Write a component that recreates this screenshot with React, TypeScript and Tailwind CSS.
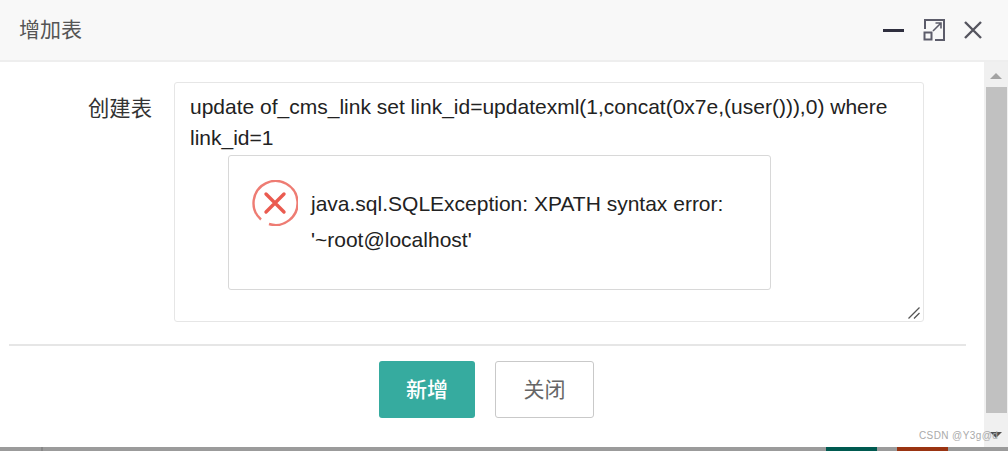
export default function App() {
  return (
    <div className="relative flex h-[451px] w-[1008px] flex-col overflow-hidden bg-white font-['Liberation_Sans','Noto_Sans_CJK_SC',sans-serif] text-[#333]">
      <header className="flex h-[62px] shrink-0 items-center justify-between border-b-2 border-[#eeeeee] bg-[#f8f8f8] pl-[19px] pr-[26px]">
        <h1 className="text-[21px] font-normal text-[#555]">增加表</h1>
        <div className="flex items-center gap-[19px]">
          <div className="h-[3px] w-[21px] bg-[#2f2f3f]" />
          <svg className="h-[22px] w-[22px] text-[#5c5c6a]" viewBox="0 0 22 22" fill="none" stroke="currentColor" strokeWidth={2}>
            <path d="M2 10V1h19v20h-9" />
            <rect x="1.5" y="13.5" width="7" height="7" />
            <path d="M10 12l8-8M12.5 4H18v5.5" strokeWidth={1.6} />
          </svg>
          <svg className="h-[18px] w-[18px] text-[#55555f]" viewBox="0 0 18 18" fill="none" stroke="currentColor" strokeWidth={2.4}>
            <path d="M1 1l16 16M17 1L1 17" />
          </svg>
        </div>
      </header>

      <div className="flex min-h-0 flex-1">
        <main className="relative w-[984px] shrink-0 pl-[9px] pr-[18px] pt-5">
          <div className="flex">
            <label className="w-[143px] pt-3 text-right text-[21.33px] leading-[30px] text-[#333]">创建表</label>
            <div className="relative ml-[22px] h-[240px] w-[750px]">
              <textarea
                readOnly
                className="block h-full w-full resize-none rounded-[3px] border border-[#e6e6e6] px-[15px] py-2 text-[21px] leading-[31px] text-[#222] outline-none"
                defaultValue="update of_cms_link set link_id=updatexml(1,concat(0x7e,(user())),0) where link_id=1"
              />
              <svg className="absolute bottom-[3px] right-[4px] h-3 w-3 text-[#555]" viewBox="0 0 12 12" fill="none" stroke="currentColor" strokeWidth={1.3}>
                <path d="M0.5 11.5L11.5 0.5M6 11.5l5.5-5.5" />
              </svg>
            </div>
          </div>

          <div className="mt-[22px] h-[2px] w-[957px] bg-[#e6e6e6]" />

          <div className="ml-[370px] mt-[15px] flex gap-5">
            <button className="h-[57px] w-[96px] rounded-[3px] bg-[#36ab9f] text-[21px] font-medium text-white">新增</button>
            <button className="h-[57px] w-[99px] rounded-[3px] border border-[#c9c9c9] bg-white text-[21px] text-[#666]">关闭</button>
          </div>

          {/* error popup over the textarea */}
          <div className="absolute left-[228px] top-[93px] flex h-[135px] w-[543px] rounded-[3px] border border-[#d8d8d8] bg-white pl-[23px] pt-[24px]">
            <svg className="h-[46px] w-[46px] shrink-0" viewBox="0 0 46 46" fill="none" stroke="#ea5b50">
              <path d="M9 39.5A22 22 0 1 1 17 44" strokeWidth={2.4} opacity={0.8} />
              <path d="M14 14l18 18M32 14L14 32" strokeWidth={3.4} strokeLinecap="round" />
            </svg>
            <p className="ml-[13px] w-[440px] pt-[6px] text-[21px] leading-[36px] text-[#222]">
              java.sql.SQLException: XPATH syntax error: '~root@localhost'
            </p>
          </div>
        </main>

        <aside className="flex w-6 shrink-0 flex-col items-center bg-[#f0f0f0]">
          <div className="flex h-[25px] w-full items-center justify-center pt-[2px]">
            <div className="h-0 w-0 border-x-[6px] border-b-[6px] border-x-transparent border-b-[#a3a3a3]" />
          </div>
          <div className="ml-[1px] h-[326px] w-[21px] bg-[#c1c1c1]" />
          <div className="flex flex-1 items-center justify-center pt-[9px]">
            <div className="h-0 w-0 border-x-[6px] border-t-[6px] border-x-transparent border-t-[#505050]" />
          </div>
        </aside>
      </div>

      {/* page behind the dialog peeking out */}
      <div className="flex h-1 shrink-0 bg-[#9b9b9b]">
        <div className="w-[41px]" />
        <div className="w-[2px] bg-[#888]" />
        <div className="w-[783px]" />
        <div className="w-[51px] bg-[#005a50]" />
        <div className="w-5" />
        <div className="w-[51px] bg-[#9a3412]" />
      </div>

      <span className="absolute left-[919px] top-[428px] text-[10px] tracking-[0.4px] text-[#aaa]">CSDN @Y3g@d</span>
    </div>
  );
}
